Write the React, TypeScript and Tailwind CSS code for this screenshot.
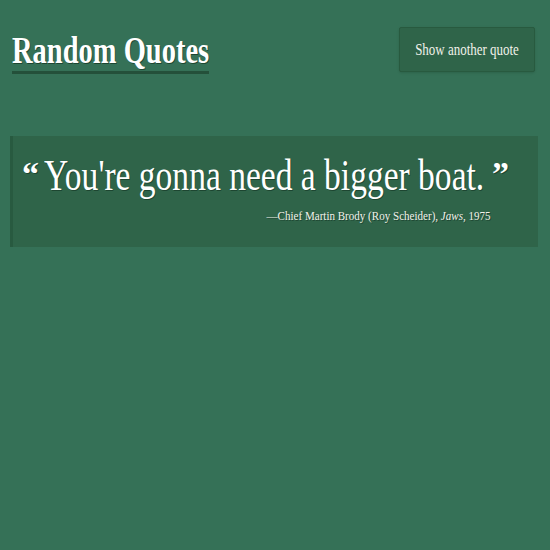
import React from "react";

const quote = {
  text: "You're gonna need a bigger boat.",
  who: "Chief Martin Brody (Roy Scheider)",
  film: "Jaws",
  year: "1975",
};

export default function App() {
  return (
    <div
      className="min-h-[550px] w-full overflow-hidden bg-[#357157] text-white"
      style={{ fontFamily: '"Liberation Serif", serif' }}
    >
      {/* HEADER */}
      <div className="flex items-start justify-between pl-3 pr-[15px] pt-[27px]">
        <div className="mt-[4px] h-[43px] w-[197px] overflow-visible border-b-[3px] border-[#24503a]">
          <h1 className="inline-block origin-left scale-x-[0.75] whitespace-nowrap text-[38px] font-bold leading-[38px] [text-shadow:1px_1px_0_#1d4631]">
            Random Quotes
          </h1>
        </div>
        <button className="h-[45px] w-[136px] overflow-hidden rounded-[2px] border border-[#285a3f] bg-[#2f6449] text-[#f1f1ea] shadow-sm">
          <span className="inline-block scale-x-[0.81] whitespace-nowrap text-[16px]">
            Show another quote
          </span>
        </button>
      </div>

      {/* QUOTE */}
      <div className="ml-[10px] mr-[12px] mt-[62px] h-[111px] border-l-[3px] border-[#285a40] bg-[#2f6449]">
        <div className="flex items-start pl-[9px] pt-[14px]">
          <span className="mt-[7px] w-[22px] text-[34px] font-bold leading-[34px] [text-shadow:1px_1px_0_#1d4631]">
            “
          </span>
          <div className="w-[441px]">
            <span className="inline-block origin-left scale-x-[0.745] whitespace-nowrap text-[45px] leading-[50px] [text-shadow:1px_1px_0_#1d4631]">
              {quote.text}
            </span>
          </div>
          <span className="ml-[7px] mt-[7px] text-[34px] font-bold leading-[34px] [text-shadow:1px_1px_0_#1d4631]">
            ”
          </span>
        </div>
        <div className="mt-[7px] flex justify-end pr-[47px]">
          <span className="inline-block origin-right scale-x-[0.85] whitespace-nowrap text-[13px] leading-[18px] text-[#f1f1ea] [text-shadow:1px_1px_0_#1d4631]">
            —{quote.who}, <i>{quote.film}</i>, {quote.year}
          </span>
        </div>
      </div>
    </div>
  );
}
